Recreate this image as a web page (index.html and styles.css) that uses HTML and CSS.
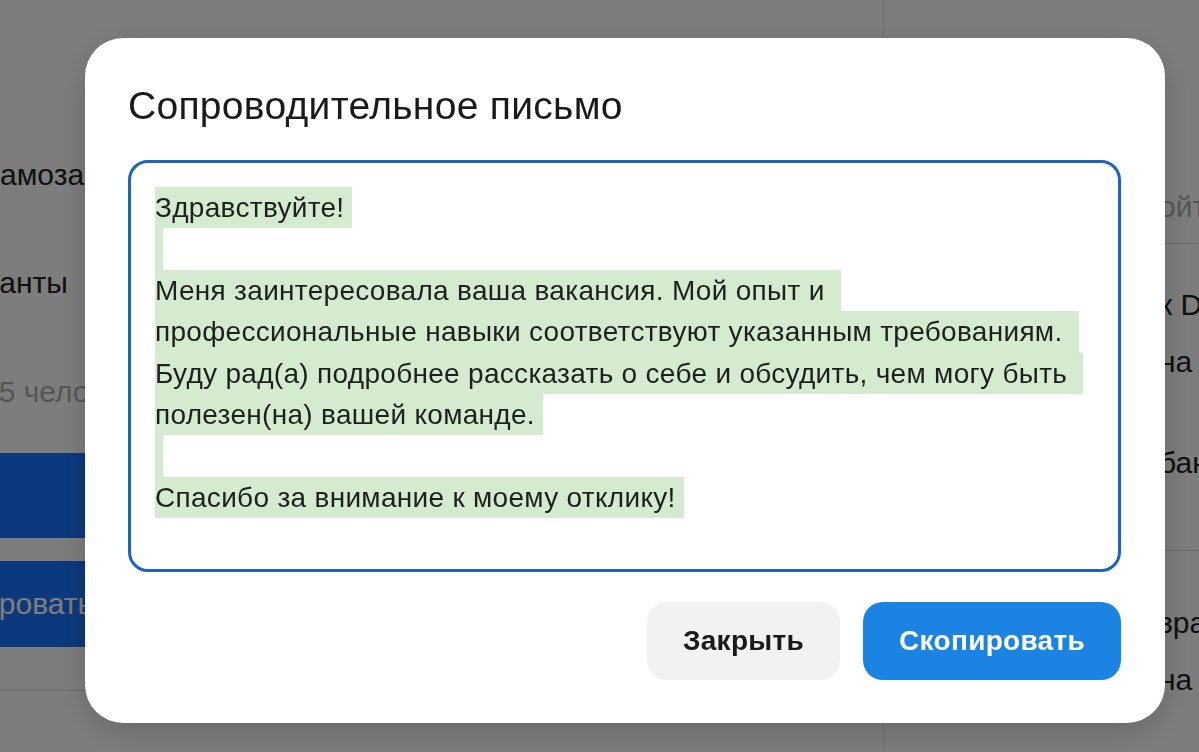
FILE: index.html
```html
<!DOCTYPE html>
<html lang="ru">
<head>
    <meta charset="UTF-8">
    <meta name="viewport" content="width=device-width, initial-scale=1.0">
    <title>Сопроводительное письмо</title>
    <link rel="stylesheet" href="styles.css">
</head>
<body>
    <div class="page">
        <div class="main-col">
            <div class="row row-type">Самозанятость</div>
            <div class="row row-grants">Гранты</div>
            <div class="row row-people muted">15 человек</div>
            <div class="bg-btn">Сгенерировать письмо</div>
            <div class="bg-btn bg-btn-copy">Скопировать</div>
            <hr class="sep">
        </div>
        <aside class="side-col">
            <div class="side-row muted side-first">ойте</div>
            <hr class="sep side-sep">
            <div class="side-row side-title">к Django</div>
            <div class="side-row side-tight">на</div>
            <div class="side-row side-gap">банк</div>
            <hr class="sep side-sep2">
            <div class="side-row side-after">зработчик</div>
            <div class="side-row side-tight">на</div>
        </aside>
    </div>

    <div class="overlay">
        <div class="modal">
            <h2 class="modal-title">Сопроводительное письмо</h2>

            <div class="letter">
                <div class="sel">Здравствуйте!</div>
                <div class="sel sel-empty"></div>
                <div class="sel">Меня заинтересовала ваша вакансия. Мой опыт и </div>
                <div class="sel">профессиональные навыки соответствуют указанным требованиям. </div>
                <div class="sel">Буду рад(а) подробнее рассказать о себе и обсудить, чем могу быть </div>
                <div class="sel">полезен(на) вашей команде.</div>
                <div class="sel sel-empty"></div>
                <div class="sel">Спасибо за внимание к моему отклику!</div>
            </div>

            <div class="actions">
                <button type="button" class="btn btn-close">Закрыть</button>
                <button type="button" class="btn btn-copy">Скопировать</button>
            </div>
        </div>
    </div>
</body>
</html>
```

FILE: styles.css
```css
html, body {
    margin: 0;
    height: 100%;
    overflow: hidden;
}
body {
    font-family: "Liberation Sans", Arial, sans-serif;
    background: #ffffff;
    color: #222;
}
.page {
    display: flex;
    height: 100%;
}
.main-col {
    width: 943px;
    padding-top: 157px;
    margin-left: -60px;
    flex-shrink: 0;
}
.row {
    font-size: 30px;
    line-height: 36px;
    white-space: nowrap;
}
.row-type { padding-left: 38px; }
.row-grants { margin-top: 72px; padding-left: 28px; }
.row-people { margin-top: 73px; padding-left: 42px; }
.muted { color: #b0b0b0; }
.bg-btn {
    height: 85px;
    margin-top: 43px;
    background: #1a74ff;
    color: #fff;
    font-size: 30px;
    line-height: 85px;
    padding-left: 160px;
    white-space: nowrap;
}
.bg-btn-copy {
    margin-top: 23px;
    height: 86px;
    line-height: 86px;
    padding-left: 0;
    text-indent: -26px;
}
.sep {
    border: 0;
    border-top: 1px solid #d6d6d6;
    margin: 43px 0 0;
}
.side-col {
    flex: 1;
    border-left: 1px solid #dddddd;
    padding-left: 275px;
    padding-top: 189px;
    white-space: nowrap;
}
.side-row {
    font-size: 30px;
    line-height: 36px;
}
.side-sep { margin: 18px 0 0 -275px; }
.side-sep2 { margin: 69px 0 0 -275px; }
.side-title { margin-top: 43px; }
.side-tight { margin-top: 21px; }
.side-gap { margin-top: 65px; }
.side-after { margin-top: 54px; }

.overlay {
    position: fixed;
    inset: 0;
    background: rgba(0, 0, 0, 0.51);
    padding: 38px 0 0 85px;
}
.modal {
    width: 1080px;
    height: 685px;
    box-sizing: border-box;
    background: #fff;
    border-radius: 38px;
    padding: 46px 44px 43px 43px;
    box-shadow: 0 8px 30px rgba(0, 0, 0, 0.18);
    display: flex;
    flex-direction: column;
}
.modal-title {
    margin: 0;
    font-size: 39px;
    font-weight: normal;
    letter-spacing: 0.3px;
    line-height: 43px;
    color: #1a1a1a;
}
.letter {
    margin-top: 33px;
    height: 412px;
    box-sizing: border-box;
    border: 3px solid #1b64c6;
    border-radius: 20px;
    padding: 24px 24px;
}
.sel {
    width: fit-content;
    background: #d4ebd0;
    color: #1b221b;
    font-size: 28px;
    letter-spacing: 0.3px;
    line-height: 41.4px;
    height: 41.4px;
    padding-right: 8px;
    white-space: pre;
}
.sel-empty {
    width: 8px;
    padding-right: 0;
}
.actions {
    margin-top: 30px;
    display: flex;
    justify-content: flex-end;
    gap: 23px;
}
.btn {
    height: 78px;
    border: 0;
    border-radius: 20px;
    padding: 0 36px;
    font-family: "Liberation Sans", Arial, sans-serif;
    font-size: 28px;
    font-weight: bold;
    letter-spacing: 0.3px;
    cursor: pointer;
}
.btn-close {
    background: #f2f2f2;
    color: #1a1a1a;
}
.btn-copy {
    background: #1b84e2;
    color: #fff;
}
```
